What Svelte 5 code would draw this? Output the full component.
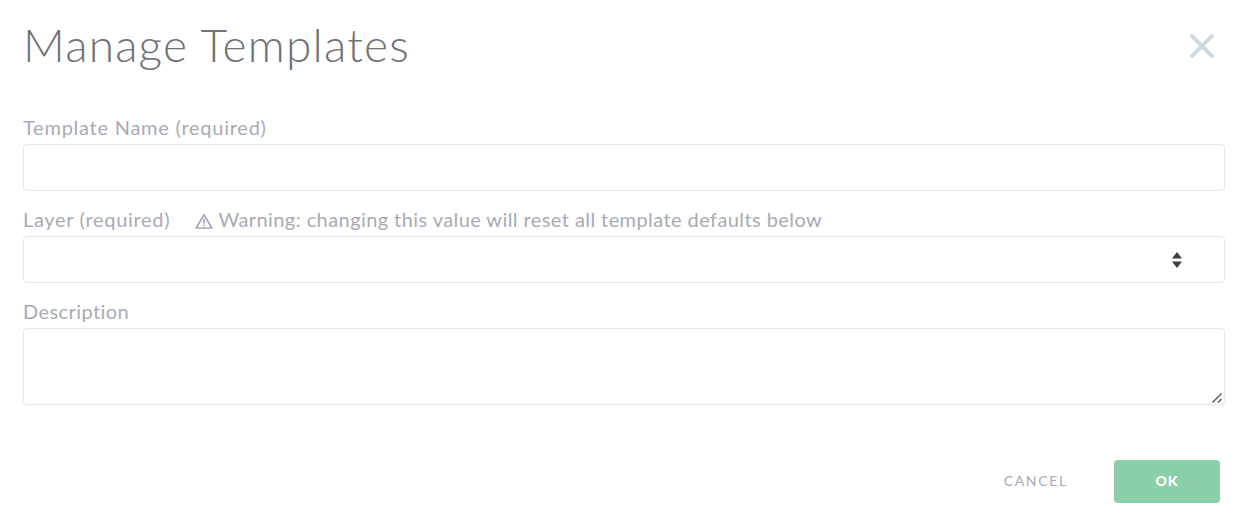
<script>
  let name = $state('');
  let layer = $state('');
  let description = $state('');
</script>

<div class="dialog">
  <header class="head">
    <h1>Manage Templates</h1>
    <button class="close" aria-label="Close">
      <svg width="24" height="24" viewBox="0 0 24 24"><path d="M2.2 2.2 21.8 21.8M21.8 2.2 2.2 21.8" stroke="#cdd8e2" stroke-width="3.8" stroke-linecap="square" fill="none"/></svg>
    </button>
  </header>

  <form class="form">
    <div class="field">
      <label class="wide" for="tn">Template Name (required)</label>
      <input id="tn" bind:value={name} />
    </div>
    <div class="field">
      <label class="mid" for="ly">Layer (required)<span class="warn"><svg width="18" height="16" viewBox="0 0 18 16"><path d="M9 1.6 16.8 15H1.2Z" fill="none" stroke="#a2a7b2" stroke-width="1.7" stroke-linejoin="round"/><path d="M9 5.8V10.4M9 11.6V13.2" stroke="#a2a7b2" stroke-width="1.6" fill="none"/></svg> Warning: changing this value will reset all template defaults below</span></label>
      <div class="select-wrap">
        <select id="ly" bind:value={layer}><option value=""></option></select>
        <svg class="arrows" width="10" height="16" viewBox="0 0 10 16"><path d="M5 0 10 6.5H0ZM5 16 0 9.5H10Z" fill="#3d3d3d"/></svg>
      </div>
    </div>
    <div class="field">
      <label for="ds">Description</label>
      <div class="area-wrap">
        <textarea id="ds" bind:value={description}></textarea>
        <svg class="grip" width="10" height="10" viewBox="0 0 10 10"><path d="M0.5 9.5 9.5 0.5M6 9.5 9.5 6" stroke="#555" stroke-width="1.4" fill="none"/></svg>
      </div>
    </div>
  </form>

  <footer class="foot">
    <button class="cancel">CANCEL</button>
    <button class="ok">OK</button>
  </footer>
</div>

<style>
  :global(body) { background: #fff; }
  .dialog {
    box-sizing: border-box;
    width: 1252px;
    height: 530px;
    padding: 0 27px 0 23px;
    font-family: Lato, "Open Sans", sans-serif;
  }
  .head {
    display: flex;
    justify-content: space-between;
    align-items: center;
    height: 108px;
    padding-bottom: 16px;
    box-sizing: border-box;
  }
  h1 {
    margin: 0 0 2px;
    font-size: 46px;
    font-weight: 300;
    letter-spacing: 1.2px;
    color: #6f7378;
    line-height: 1;
  }
  .close {
    background: none;
    border: 0;
    padding: 0;
    margin-right: 11px;
    display: flex;
  }
  .form { display: flex; flex-direction: column; gap: 9px; }
  .field { display: flex; flex-direction: column; }
  label {
    display: block;
    height: 23px;
    padding-top: 7px;
    margin-bottom: 6px;
    line-height: 24px;
    font-size: 20px;
    letter-spacing: 0.42px;
    color: #a8abb6;
    white-space: pre;
  }
  label.wide { letter-spacing: 0.75px; }
  label.mid { letter-spacing: 0.68px; }
  .warn { margin-left: 25px; letter-spacing: 0.42px; }
  .warn svg { vertical-align: -2px; }
  input, select, textarea {
    box-sizing: border-box;
    width: 100%;
    border: 1px solid #e6e8ea;
    border-radius: 4px;
    background: #fff;
    outline: none;
    display: block;
    margin: 0;
    font: inherit;
  }
  input, select { height: 47px; }
  select { appearance: none; }
  textarea { height: 77px; resize: none; }
  .select-wrap, .area-wrap { position: relative; }
  .arrows { position: absolute; right: 43px; top: 16px; }
  .grip { position: absolute; right: 3px; bottom: 2px; }
  .foot {
    display: flex;
    justify-content: flex-end;
    align-items: center;
    margin-top: 55px;
    padding-right: 5px;
  }
  .cancel {
    background: none;
    border: 0;
    padding: 0 0 3px;
    margin-right: 46px;
    font: inherit;
    font-size: 14px;
    letter-spacing: 1.7px;
    color: #a8abb6;
  }
  .ok {
    width: 106px;
    height: 43px;
    border: 0;
    border-radius: 4px;
    padding: 0 0 2px;
    background: #8bcfaa;
    color: #fff;
    font: inherit;
    font-size: 14px;
    font-weight: 900;
    letter-spacing: 1px;
  }
</style>
